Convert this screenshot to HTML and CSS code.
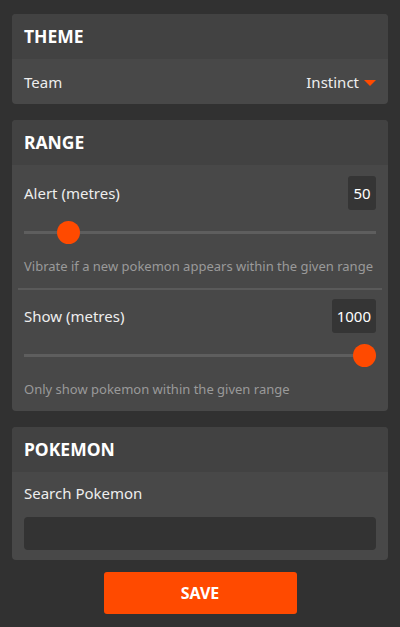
FILE: index.html
```html
<!DOCTYPE html>
<html>
<head>
<meta charset="utf-8">
<link rel="stylesheet" href="styles.css">
</head>
<body>
<div class="page">
  <div class="card">
    <div class="card-head">THEME</div>
    <div class="card-body">
      <div class="row team-row">
        <span class="label">Team</span>
        <span class="select">Instinct <span class="caret"></span></span>
      </div>
    </div>
  </div>

  <div class="card">
    <div class="card-head">RANGE</div>
    <div class="card-body">
      <div class="setting">
        <div class="row">
          <span class="label">Alert (metres)</span>
          <span class="badge">50</span>
        </div>
        <div class="slider"><div class="track"></div><div class="thumb" style="left: 9.8%"></div></div>
        <div class="hint">Vibrate if a new pokemon appears within the given range</div>
      </div>
      <div class="divider"></div>
      <div class="setting after-divider">
        <div class="row">
          <span class="label">Show (metres)</span>
          <span class="badge">1000</span>
        </div>
        <div class="slider"><div class="track"></div><div class="thumb" style="left: 100%"></div></div>
        <div class="hint">Only show pokemon within the given range</div>
      </div>
    </div>
  </div>

  <div class="card">
    <div class="card-head">POKEMON</div>
    <div class="card-body">
      <div class="label search-label">Search Pokemon</div>
      <input class="search" type="text">
    </div>
  </div>

  <div class="actions">
    <button class="save">SAVE</button>
  </div>
</div>
</body>
</html>
```

FILE: styles.css
```css
html, body {
  margin: 0;
  background: #313131;
}

body {
  font-family: "Noto Sans", "DejaVu Sans", sans-serif;
  color: #eeeeee;
}

.page {
  padding: 14px 12px 0 12px;
}

.card {
  background: #484848;
  border-radius: 4px;
  overflow: hidden;
  margin-bottom: 16px;
}

.card-head {
  background: #424242;
  height: 45px;
  line-height: 44px;
  padding: 0 12px;
  font-weight: bold;
  font-size: 17.5px;
  color: #ffffff;
}

.card-body {
  padding: 0 12px;
}

.row {
  display: flex;
  justify-content: space-between;
  align-items: center;
}

.team-row {
  height: 45px;
}

.label {
  font-size: 15px;
  color: #eeeeee;
}

.select {
  font-size: 15px;
  display: flex;
  align-items: center;
}

.caret {
  display: inline-block;
  width: 0;
  height: 0;
  margin-left: 5px;
  margin-top: 2px;
  border-left: 6px solid transparent;
  border-right: 6px solid transparent;
  border-top: 6px solid #ff4a00;
}

.setting {
  padding-top: 11px;
}

.setting.after-divider {
  padding-top: 9px;
}

.badge {
  background: #353535;
  border-radius: 3px;
  min-width: 28px;
  height: 34px;
  line-height: 34px;
  padding: 0 5px;
  box-sizing: border-box;
  text-align: center;
  font-size: 15px;
  color: #ffffff;
}

.slider {
  position: relative;
  height: 22px;
  margin: 11px 12px 14px 12px;
}

.track {
  position: absolute;
  left: -12px;
  right: -12px;
  top: 10px;
  height: 3px;
  background: #5e5e5e;
}

.thumb {
  position: absolute;
  top: 0;
  width: 23px;
  height: 23px;
  margin-left: -11px;
  border-radius: 50%;
  background: #ff4a00;
}

.hint {
  font-size: 13px;
  color: #9a9a9a;
  padding-bottom: 13px;
  white-space: nowrap;
}

.divider {
  height: 2px;
  background: #5a5a5a;
  margin: 0 -6px;
}

.search-label {
  padding-top: 10px;
  height: 34px;
  line-height: 22px;
  box-sizing: border-box;
}

.search {
  display: block;
  width: 100%;
  height: 33px;
  margin: 11px 0 10px 0;
  box-sizing: border-box;
  background: #333333;
  border: none;
  border-radius: 4px;
}

.actions {
  display: flex;
  justify-content: center;
  margin-top: -4px;
}

.save {
  width: 193px;
  height: 42px;
  border: none;
  border-radius: 3px;
  background: #ff4a00;
  color: #ffffff;
  font-family: inherit;
  font-weight: bold;
  font-size: 16px;
}
```
